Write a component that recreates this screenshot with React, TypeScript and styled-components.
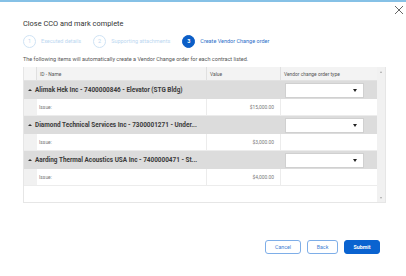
import { createGlobalStyle } from "styled-components";
import styled from "styled-components";

const GlobalStyle = createGlobalStyle`
	html, body {
		margin: 0;
		padding: 0;
		background: #ffffff;
		font-family: Roboto, "Liberation Sans", sans-serif;
	}
`;

const items = [
	{ id: "Alimak Hek Inc - 7400000846 - Elevator (STG Bldg)", value: "$15,000.00" },
	{ id: "Diamond Technical Services Inc - 7300001271 - Under...", value: "$3,000.00" },
	{ id: "Aarding Thermal Acoustics USA Inc - 7400000471 - St...", value: "$4,000.00" },
];

const steps = [
	{ n: 1, label: "Executed details" },
	{ n: 2, label: "Supporting attachments" },
	{ n: 3, label: "Create Vendor Change order" },
];

const Modal = styled.div`
	width: 406px;
	height: 276px;
	box-sizing: border-box;
	border-top: 2px solid #86c1e6;
	padding: 0 22px 0 23px;
	display: flex;
	flex-direction: column;
`;
const TopBar = styled.div`
	display: flex;
	justify-content: flex-end;
	height: 12px;
	padding-top: 3px;
	margin-right: -20px;
`;
const CloseButton = styled.button`
	border: 0;
	background: none;
	padding: 0;
	width: 10px;
	height: 10px;
	cursor: pointer;
	display: flex;
`;
const Title = styled.h1`
	margin: 2px 0 0;
	font-size: 7.4px;
	line-height: 10px;
	font-weight: 400;
	color: #333333;
`;
const Stepper = styled.ol`
	display: flex;
	align-items: center;
	list-style: none;
	margin: 5px 0 0;
	padding: 0;
	height: 14px;
`;
const Step = styled.li<{ $active?: boolean }>`
	display: flex;
	align-items: center;
	margin-right: 12px;
	font-size: 5.5px;
	color: ${(p) => (p.$active ? "#2e70c9" : "#bcd7f1")};
	span {
		width: 13px;
		height: 13px;
		box-sizing: border-box;
		border-radius: 50%;
		display: flex;
		align-items: center;
		justify-content: center;
		margin-right: 5px;
		font-size: 5.5px;
		font-weight: ${(p) => (p.$active ? 700 : 400)};
		border: 1px solid ${(p) => (p.$active ? "#0b5ec7" : "#cfe3f5")};
		background: ${(p) => (p.$active ? "#0b5ec7" : "#ffffff")};
		color: ${(p) => (p.$active ? "#ffffff" : "#bcd7f1")};
	}
`;
const Description = styled.p`
	margin: 7px 0 0;
	font-size: 5.5px;
	line-height: 8px;
	color: #555555;
`;
const TableFrame = styled.div`
	margin-top: 4px;
	width: 363px;
	height: 136px;
	box-sizing: border-box;
	border: 1px solid #e6e6e6;
	border-top: 0;
	display: flex;
`;
const TableBody = styled.div`
	flex: 1;
	display: flex;
	flex-direction: column;
`;
const Row = styled.div`
	display: grid;
	grid-template-columns: 13px 170px 74px 1fr;
`;
const HeaderRow = styled(Row)`
	height: 13px;
	background: #f3f3f3;
	border-bottom: 1px solid #e2e2e2;
`;
const HeaderCell = styled.div`
	font-size: 4.9px;
	color: #555555;
	display: flex;
	align-items: center;
	padding-left: 3px;
	border-right: 1px solid #e0e0e0;
	&:first-child {
		background: #f6f6f6;
	}
	&:last-child {
		border-right: 0;
	}
`;
const GroupRow = styled.div`
	height: 18px;
	background: #dcdcdc;
	display: grid;
	grid-template-columns: 257px 1fr;
	align-items: center;
`;
const GroupLabel = styled.div`
	font-size: 6.4px;
	font-weight: 700;
	color: #3a3a3a;
	padding-left: 4px;
	display: flex;
	align-items: center;
	white-space: nowrap;
	&::before {
		content: "";
		border-left: 2px solid transparent;
		border-right: 2px solid transparent;
		border-bottom: 2.5px solid #333333;
		margin-right: 3px;
	}
`;
const SelectCell = styled.div`
	padding: 0 13px 0 4px;
`;
const Select = styled.div`
	height: 15px;
	box-sizing: border-box;
	background: #ffffff;
	border: 1px solid #d0d0d0;
	display: flex;
	align-items: center;
	justify-content: flex-end;
	padding-right: 6px;
	&::after {
		content: "";
		border-left: 2.5px solid transparent;
		border-right: 2.5px solid transparent;
		border-top: 3px solid #222222;
	}
`;
const IssueRow = styled(Row)`
	height: 16px;
	border-bottom: 1px solid #ececec;
`;
const IssueCell = styled.div<{ $align?: string }>`
	font-size: 4.9px;
	color: #777777;
	display: flex;
	align-items: center;
	justify-content: ${(p) => p.$align ?? "flex-start"};
	padding: 0 6px 0 2px;
	border-right: 1px solid #ececec;
	&:first-child {
		background: #f1f1f1;
		border-right: 0;
		padding: 0;
	}
	&:last-child {
		border-right: 0;
	}
`;
const Scrollbar = styled.div`
	width: 8px;
	background: #f1f1f1;
	display: flex;
	flex-direction: column;
	justify-content: space-between;
	align-items: center;
	padding: 4px 0 3px;
`;
const Arrow = styled.span<{ $down?: boolean }>`
	border-left: 1.5px solid transparent;
	border-right: 1.5px solid transparent;
	${(p) => (p.$down ? "border-top" : "border-bottom")}: 2px solid #a8a8a8;
`;
const Footer = styled.div`
	margin-top: 37px;
	padding-right: 4px;
	display: flex;
	justify-content: flex-end;
	gap: 6px;
`;
const Button = styled.button<{ $primary?: boolean; $w: number }>`
	width: ${(p) => p.$w}px;
	height: 14px;
	box-sizing: border-box;
	padding: 0;
	border-radius: 3px;
	font-family: Roboto, "Liberation Sans", sans-serif;
	font-size: 5.3px;
	font-weight: ${(p) => (p.$primary ? 700 : 400)};
	border: 1px solid ${(p) => (p.$primary ? "#0a63d0" : "#7eaee8")};
	background: ${(p) => (p.$primary ? "#0a63d0" : "#ffffff")};
	color: ${(p) => (p.$primary ? "#ffffff" : "#3f7fd4")};
`;

export default function App(): JSX.Element {
	return (
		<Modal>
			<GlobalStyle />
			<TopBar>
				<CloseButton aria-label="Close">
					<svg width="10" height="10" viewBox="0 0 10 10">
						<path d="M1 1L9 9M9 1L1 9" stroke="#555" strokeWidth="0.9" />
					</svg>
				</CloseButton>
			</TopBar>
			<Title>Close CCO and mark complete</Title>
			<Stepper>
				{steps.map((s) => (
					<Step key={s.n} $active={s.n === 3}>
						<span>{s.n}</span>
						{s.label}
					</Step>
				))}
			</Stepper>
			<Description>
				The following items will automatically create a Vendor Change order for each contract listed.
			</Description>
			<TableFrame>
				<TableBody>
					<HeaderRow>
						<HeaderCell />
						<HeaderCell>ID - Name</HeaderCell>
						<HeaderCell>Value</HeaderCell>
						<HeaderCell>Vendor change order type</HeaderCell>
					</HeaderRow>
					{items.map((item) => (
						<div key={item.id}>
							<GroupRow>
								<GroupLabel>{item.id}</GroupLabel>
								<SelectCell>
									<Select />
								</SelectCell>
							</GroupRow>
							<IssueRow>
								<IssueCell />
								<IssueCell>Issue:</IssueCell>
								<IssueCell $align="flex-end">{item.value}</IssueCell>
								<IssueCell />
							</IssueRow>
						</div>
					))}
				</TableBody>
				<Scrollbar>
					<Arrow />
					<Arrow $down />
				</Scrollbar>
			</TableFrame>
			<Footer>
				<Button $w={36}>Cancel</Button>
				<Button $w={31}>Back</Button>
				<Button $w={36} $primary>
					Submit
				</Button>
			</Footer>
		</Modal>
	);
}
